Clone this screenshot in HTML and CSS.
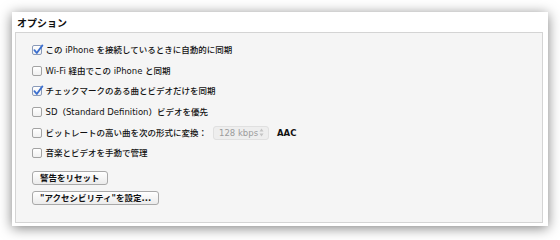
FILE: index.html
```html
<!DOCTYPE html>
<html lang="ja">
<head>
<meta charset="utf-8">
<title>オプション</title>
<link rel="stylesheet" href="styles.css">
</head>
<body>
<div class="stage">
  <section class="window">
    <h2 class="title">オプション</h2>
    <div class="panel">
      <ul class="options">
        <li class="opt">
          <span class="cb checked"><svg viewBox="0 0 12 12" width="12" height="12"><path d="M2.4 6.2 L4.8 9 L10.4 1.4" fill="none" stroke="#3b6fcf" stroke-width="1.8" stroke-linecap="round" stroke-linejoin="round"/></svg></span>
          <span class="label">この iPhone を接続しているときに自動的に同期</span>
        </li>
        <li class="opt">
          <span class="cb"></span>
          <span class="label">Wi-Fi 経由でこの iPhone と同期</span>
        </li>
        <li class="opt">
          <span class="cb checked"><svg viewBox="0 0 12 12" width="12" height="12"><path d="M2.4 6.2 L4.8 9 L10.4 1.4" fill="none" stroke="#3b6fcf" stroke-width="1.8" stroke-linecap="round" stroke-linejoin="round"/></svg></span>
          <span class="label">チェックマークのある曲とビデオだけを同期</span>
        </li>
        <li class="opt">
          <span class="cb"></span>
          <span class="label">SD（Standard Definition）ビデオを優先</span>
        </li>
        <li class="opt">
          <span class="cb"></span>
          <span class="label">ビットレートの高い曲を次の形式に変換：</span>
          <span class="select">128 kbps<svg class="arrows" viewBox="0 0 5 9" width="5" height="9"><path d="M2.5 0.5 L4.5 3.5 L0.5 3.5 Z M2.5 8.5 L4.5 5.5 L0.5 5.5 Z" fill="#c4c4c4"/></svg></span>
          <span class="codec">AAC</span>
        </li>
        <li class="opt">
          <span class="cb"></span>
          <span class="label">音楽とビデオを手動で管理</span>
        </li>
      </ul>
      <div class="buttons">
        <button class="btn" type="button">警告をリセット</button>
        <button class="btn" type="button">"アクセシビリティ"を設定...</button>
      </div>
    </div>
  </section>
</div>
</body>
</html>
```

FILE: styles.css
```css
* {
  box-sizing: border-box;
}

html, body {
  margin: 0;
  padding: 0;
  background: #ffffff;
}

body {
  width: 560px;
  height: 240px;
  overflow: hidden;
  font-family: "DejaVu Sans", "Noto Sans CJK JP", sans-serif;
  color: #111111;
}

.stage {
  padding: 12px 12px 0 12px;
}

.window {
  width: 536px;
  height: 214px;
  background: #ffffff;
  display: flex;
  flex-direction: column;
  box-shadow: 0 2px 12px rgba(0, 0, 0, 0.5);
}

.title {
  margin: 0;
  height: 20px;
  padding: 5px 0 0 5px;
  font-family: "Noto Sans CJK JP", sans-serif;
  font-size: 10px;
  line-height: 12px;
  font-weight: 700;
  color: #111111;
}

.panel {
  flex: 1;
  margin: 0 5px 3px 3px;
  border: 1px solid #d4d4d4;
  background: #f5f5f5;
  padding: 7px 0 0 16px;
}

.options {
  list-style: none;
  margin: 0;
  padding: 0;
}

.opt {
  height: 20.6px;
  display: flex;
  align-items: center;
  font-size: 8.5px;
  font-weight: 500;
}

.cb {
  position: relative;
  width: 10px;
  height: 10px;
  flex: none;
  margin-right: 3.5px;
  border: 1px solid #a3a3a3;
  border-radius: 2px;
  background: linear-gradient(#ffffff, #f0f0f0);
}

.cb svg {
  position: absolute;
  left: -1px;
  top: -2px;
}

.cb.checked {
  border-color: #8a9ab8;
}

.label {
  white-space: nowrap;
  line-height: 12px;
}

.select {
  display: inline-flex;
  align-items: center;
  justify-content: space-between;
  width: 56px;
  height: 14px;
  margin-left: 6px;
  padding: 0 4px 0 5px;
  border: 1px solid #e0e0e0;
  border-radius: 3px;
  background: #eeeeee;
  color: #9c9c9c;
  font-size: 8.5px;
  font-weight: 400;
}

.arrows {
  flex: none;
}

.codec {
  margin-left: 8px;
  font-size: 8.5px;
  font-weight: 700;
  color: #111111;
}

.buttons {
  margin-top: 7px;
  display: flex;
  flex-direction: column;
  align-items: flex-start;
  gap: 6px;
}

.btn {
  height: 14px;
  margin: 0;
  padding: 0 7px;
  border: 1px solid #a9a9a9;
  border-radius: 3px;
  background: linear-gradient(#ffffff, #ebebeb);
  font-family: "DejaVu Sans", "Noto Sans CJK JP", sans-serif;
  font-size: 8.5px;
  line-height: 12px;
  font-weight: 700;
  color: #111111;
  white-space: nowrap;
}
```
